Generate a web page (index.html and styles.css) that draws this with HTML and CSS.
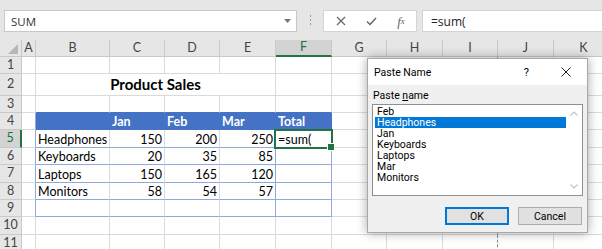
FILE: index.html
```html
<!DOCTYPE html>
<html>
<head>
<meta charset="utf-8">
<link rel="stylesheet" href="styles.css">
</head>
<body>
<div class="fbar">
  <div class="namebox"><span>SUM</span><svg class="dd" width="7" height="4" viewBox="0 0 7 4"><path d="M0 0h7L3.5 4z" fill="#777"/></svg></div>
  <div class="grip"><i></i><i></i><i></i></div>
  <div class="fbtns">
    <span class="fb"><svg width="10" height="10" viewBox="0 0 10 10"><path d="M1 1L9 9M9 1L1 9" stroke="#666" stroke-width="1.2" fill="none"/></svg></span>
    <span class="fb"><svg width="11" height="9" viewBox="0 0 11 9"><path d="M1 4.5L4 7.5L10 1" stroke="#666" stroke-width="1.5" fill="none"/></svg></span>
    <span class="fb fx">f<sub>x</sub></span>
  </div>
  <div class="finput">=sum(</div>
</div>

<div class="sheet">
  <div class="ch corner"><svg width="10" height="10" viewBox="0 0 10 10"><path d="M10 0V10H0z" fill="#b6b6b6"/></svg></div>
  <div class="ch">A</div><div class="ch">B</div><div class="ch">C</div><div class="ch">D</div><div class="ch">E</div><div class="ch sel">F</div><div class="ch">G</div><div class="ch">H</div><div class="ch">I</div><div class="ch">J</div><div class="ch">K</div>

  <div class="rh">1</div>
  <div class="c"></div><div class="c"></div><div class="c"></div><div class="c"></div><div class="c"></div><div class="c"></div><div class="c"></div><div class="c"></div><div class="c pb"></div><div class="c"></div><div class="c"></div>

  <div class="rh">2</div>
  <div class="c"></div><div class="c title">Product Sales</div><div class="c"></div><div class="c"></div><div class="c"></div><div class="c pb"></div><div class="c"></div><div class="c"></div>

  <div class="rh">3</div>
  <div class="c"></div><div class="c t3"></div><div class="c t3"></div><div class="c t3"></div><div class="c t3"></div><div class="c t3"></div><div class="c"></div><div class="c"></div><div class="c pb"></div><div class="c"></div><div class="c"></div>

  <div class="rh">4</div>
  <div class="c tl"></div><div class="c th"></div><div class="c th">Jan</div><div class="c th">Feb</div><div class="c th">Mar</div><div class="c th">Total</div><div class="c"></div><div class="c"></div><div class="c pb"></div><div class="c"></div><div class="c"></div>

  <div class="rh sel">5</div>
  <div class="c tl"></div><div class="c tb">Headphones</div><div class="c tb num">150</div><div class="c tb num">200</div><div class="c tb tr num">250</div><div class="c tb tr active">=sum(</div><div class="c"></div><div class="c"></div><div class="c pb"></div><div class="c"></div><div class="c"></div>

  <div class="rh">6</div>
  <div class="c tl"></div><div class="c tb">Keyboards</div><div class="c tb num">20</div><div class="c tb num">35</div><div class="c tb tr num">85</div><div class="c tb tr"></div><div class="c"></div><div class="c"></div><div class="c pb"></div><div class="c"></div><div class="c"></div>

  <div class="rh">7</div>
  <div class="c tl"></div><div class="c tb">Laptops</div><div class="c tb num">150</div><div class="c tb num">165</div><div class="c tb tr num">120</div><div class="c tb tr"></div><div class="c"></div><div class="c"></div><div class="c pb"></div><div class="c"></div><div class="c"></div>

  <div class="rh">8</div>
  <div class="c tl"></div><div class="c tb">Monitors</div><div class="c tb num">58</div><div class="c tb num">54</div><div class="c tb tr num">57</div><div class="c tb tr"></div><div class="c"></div><div class="c"></div><div class="c pb"></div><div class="c"></div><div class="c"></div>

  <div class="rh">9</div>
  <div class="c tl"></div><div class="c tb"></div><div class="c tb"></div><div class="c tb"></div><div class="c tb tr"></div><div class="c tb tr"></div><div class="c"></div><div class="c"></div><div class="c pb"></div><div class="c"></div><div class="c"></div>

  <div class="rh">10</div>
  <div class="c"></div><div class="c"></div><div class="c"></div><div class="c"></div><div class="c"></div><div class="c"></div><div class="c"></div><div class="c"></div><div class="c pb"></div><div class="c"></div><div class="c"></div>

  <div class="rh">11</div>
  <div class="c"></div><div class="c"></div><div class="c"></div><div class="c"></div><div class="c"></div><div class="c"></div><div class="c"></div><div class="c"></div><div class="c pb"></div><div class="c"></div><div class="c"></div>
</div>

<div class="dlg">
  <div class="dtitle">
    <span class="dname">Paste Name</span>
    <span class="q">?</span>
    <span class="dx"><svg width="10" height="10" viewBox="0 0 10 10"><path d="M0.5 0.5L9.5 9.5M9.5 0.5L0.5 9.5" stroke="#222" stroke-width="1" fill="none"/></svg></span>
  </div>
  <div class="dbody">
    <div class="lbl">Paste <u>n</u>ame</div>
    <div class="list">
      <div class="items">
        <div class="it">Feb</div>
        <div class="it on">Headphones</div>
        <div class="it">Jan</div>
        <div class="it">Keyboards</div>
        <div class="it">Laptops</div>
        <div class="it">Mar</div>
        <div class="it">Monitors</div>
      </div>
      <div class="sb">
        <svg width="8" height="5" viewBox="0 0 8 5"><path d="M0.5 4.5L4 1L7.5 4.5" stroke="#c2c2c2" stroke-width="1.1" fill="none"/></svg>
        <svg width="8" height="5" viewBox="0 0 8 5"><path d="M0.5 0.5L4 4L7.5 0.5" stroke="#c2c2c2" stroke-width="1.1" fill="none"/></svg>
      </div>
    </div>
    <div class="btns">
      <div class="btn ok">OK</div>
      <div class="btn">Cancel</div>
    </div>
  </div>
</div>
</body>
</html>
```

FILE: styles.css
```css
* { box-sizing: border-box; }
html, body { margin: 0; padding: 0; }
body {
  width: 602px;
  height: 249px;
  overflow: hidden;
  background: #fff;
  font-family: Lato, "Liberation Sans", sans-serif;
  position: relative;
}

/* formula bar */
.fbar {
  height: 40px;
  background: #e6e6e6;
  display: flex;
  align-items: flex-start;
  padding: 10px 0 0 4px;
}
.namebox {
  width: 293px;
  height: 22px;
  background: #fff;
  border: 1px solid #c8c8c8;
  display: flex;
  align-items: center;
  justify-content: space-between;
  padding: 0 5px 0 6px;
  font-family: "Open Sans", "Noto Sans", sans-serif;
  font-size: 11.5px;
  color: #333;
}
.grip {
  margin-left: 13px;
  margin-top: 5px;
  display: flex;
  flex-direction: column;
  gap: 2px;
}
.grip i {
  display: block;
  width: 1px;
  height: 2px;
  background: #9a9a9a;
}
.fbtns {
  margin-left: 12px;
  width: 94px;
  height: 22px;
  background: #fff;
  border: 1px solid #d4d4d4;
  display: flex;
  align-items: center;
  padding-left: 2px;
}
.fb {
  width: 31px;
  display: flex;
  justify-content: center;
  align-items: center;
}
.fx {
  font-family: "Liberation Serif", serif;
  font-style: italic;
  font-size: 13px;
  color: #666;
  line-height: 1;
}
.fx sub { font-size: 9px; vertical-align: -2px; }
.finput {
  margin-left: 5px;
  flex: 1;
  height: 22px;
  margin-right: -10px;
  background: #fff;
  border: 1px solid #d4d4d4;
  padding-left: 8px;
  display: flex;
  align-items: center;
  font-family: "Open Sans", "Noto Sans", sans-serif;
  font-size: 12px;
  color: #222;
}

/* sheet */
.sheet {
  display: grid;
  grid-template-columns: 22px 14px 74px 55px 55px 56px 56px 55px 56px 55px 56px 60px;
  grid-template-rows: 17px 17px 22px 17px 17px 18px 17px 18px 17px 17px 18px 17px;
  width: 614px;
}
.c {
  border-right: 1px solid #dadada;
  border-bottom: 1px solid #dadada;
  font-size: 12.5px;
  line-height: 14px;
  display: flex;
  align-items: flex-end;
  padding: 0 2px 0 2px;
  white-space: nowrap;
  color: #000;
}
.ch, .rh {
  background: #e6e6e6;
  border-right: 1px solid #c9c9c9;
  border-bottom: 1px solid #c9c9c9;
  display: flex;
  align-items: center;
  justify-content: center;
  font-size: 12.5px;
  color: #444;
  line-height: 1;
}
.corner {
  justify-content: flex-end;
  align-items: flex-end;
  padding: 0 3px 2px 0;
}
.ch.sel {
  background: #d3d3d3;
  color: #217346;
  border-bottom: 2px solid #217346;
}
.rh.sel {
  background: #d3d3d3;
  color: #217346;
  border-right: 2px solid #217346;
}
.pb { border-right: 1px dashed #8a8a8a; }

.title {
  grid-column: span 4;
  justify-content: center;
  font-weight: 700;
  font-size: 15px;
  padding-bottom: 4px;
}
.t3 { border-bottom-color: #4472c4; }
.tl { border-right-color: #8ea9db; }
.th {
  background: #4472c4;
  color: #fff;
  font-weight: 700;
  border-right-color: #4472c4;
  border-bottom-color: #4472c4;
}
.tb { border-bottom-color: #8ea9db; }
.tr { border-right-color: #8ea9db; }
.num { justify-content: flex-end; }
.active { position: relative; }
.active::after {
  content: "";
  position: absolute;
  left: -2px;
  top: -1px;
  right: -2px;
  bottom: -2px;
  border: 2px solid #217346;
}
.active::before {
  content: "";
  position: absolute;
  right: -4px;
  bottom: -4px;
  width: 6px;
  height: 6px;
  background: #217346;
  border: 1px solid #fff;
  z-index: 2;
}

/* dialog */
.dlg {
  position: absolute;
  left: 367px;
  top: 58px;
  width: 221px;
  height: 175px;
  background: #f0f0f0;
  border: 1px solid #a8a8a8;
  box-shadow: 0 0 10px rgba(0, 0, 0, 0.35);
  font-family: Roboto, "Open Sans", sans-serif;
  color: #000;
}
.dtitle {
  height: 26px;
  background: #fff;
  display: flex;
  align-items: center;
  padding-left: 6px;
  font-size: 10.5px;
}
.q {
  margin-left: auto;
  font-size: 11px;
}
.dx {
  width: 40px;
  display: flex;
  justify-content: center;
  margin-left: 18px;
  padding-right: 2px;
}
.dbody {
  padding: 5px 4px 0 4px;
}
.lbl {
  font-size: 10.5px;
  line-height: 12px;
  padding-left: 1px;
}
.list {
  margin-top: 2px;
  height: 92px;
  background: #fff;
  border: 1px solid #8e8f94;
  display: flex;
}
.items {
  flex: 1;
  padding: 1px 0 0 2px;
}
.it {
  font-size: 10.5px;
  line-height: 11px;
  height: 11px;
  padding-left: 2px;
}
.it.on {
  background: #0078d7;
  color: #fff;
}
.sb {
  width: 16px;
  display: flex;
  flex-direction: column;
  justify-content: space-between;
  align-items: center;
  padding: 6px 0 6px;
}
.btns {
  margin-top: 11px;
  display: flex;
  justify-content: flex-end;
  gap: 9px;
  padding-right: 1px;
}
.btn {
  width: 64px;
  height: 18px;
  background: #e1e1e1;
  border: 1px solid #adadad;
  display: flex;
  align-items: center;
  justify-content: center;
  font-size: 10.5px;
}
.btn.ok {
  border-color: #0078d7;
  box-shadow: inset 0 0 0 1px #0078d7;
}
```
